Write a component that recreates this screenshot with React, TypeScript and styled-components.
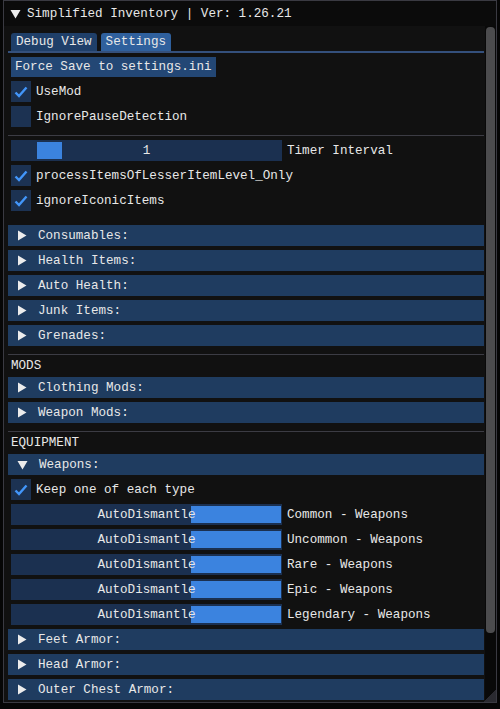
import React from "react";
import styled, { createGlobalStyle } from "styled-components";

const Global = createGlobalStyle`
  html, body { margin: 0; padding: 0; background: #060606; }
  body { width: 500px; height: 709px; overflow: hidden; }
  * { box-sizing: border-box; }
`;

const FONT = `"Liberation Mono", "DejaVu Sans Mono", monospace`;

const Window = styled.div`
  margin-left: 3px;
  width: 494px;
  height: 703px;
  border: 1px solid #3a3a42;
  background: #111111;
  display: flex;
  flex-direction: column;
  font-family: ${FONT};
  font-size: 12.6px;
  color: #e8e8e8;
  position: relative;
`;

const TitleBar = styled.div`
  height: 25px;
  flex: none;
  background: #0b0b0b;
  display: flex;
  align-items: center;
  gap: 6px;
  padding-left: 6px;
  white-space: pre;
`;

const Body = styled.div`
  flex: 1;
  display: flex;
  min-height: 0;
`;

const Content = styled.div`
  flex: 1;
  padding: 7px 4px 0 7px;
  display: flex;
  flex-direction: column;
  gap: 4px;
  overflow: hidden;
  & > * { flex: none; }
`;

const ScrollTrack = styled.div`
  width: 11px;
  flex: none;
  background: #090909;
  padding: 1px 1px 0 1px;
`;

const ScrollThumb = styled.div`
  height: 606px;
  border-radius: 4px;
  background: #4c4c4e;
`;

const TabBar = styled.div`
  display: flex;
  gap: 4px;
  margin: 0 -3px;
  padding-left: 3px;
  border-bottom: 2px solid #34507c;
`;

const Tab = styled.div<{ $active?: boolean }>`
  height: 18px;
  padding: 0 5px;
  display: flex;
  align-items: center;
  border-radius: 3px 3px 0 0;
  background: ${(p) => (p.$active ? "#2f609d" : "#1f3f69")};
  white-space: pre;
`;

const Button = styled.div`
  align-self: flex-start;
  height: 20px;
  padding: 0 4px;
  display: flex;
  align-items: center;
  background: #234775;
  white-space: pre;
`;

const Row = styled.div<{ $mt?: number }>`
  display: flex;
  align-items: center;
  gap: 5px;
  height: 21px;
  margin-top: ${(p) => p.$mt ?? 0}px;
  white-space: pre;
`;

const Box = styled.div`
  width: 20px;
  height: 21px;
  background: #1c3252;
  display: flex;
  align-items: center;
  justify-content: center;
`;

const Separator = styled.div<{ $mt?: number }>`
  height: 1px;
  background: #3c3c44;
  margin: ${(p) => p.$mt ?? 0}px -3px 0 -3px;
`;

const Frame = styled.div`
  position: relative;
  width: 271px;
  height: 21px;
  background: #1b3050;
  display: flex;
  align-items: center;
  justify-content: center;
  flex: none;
`;

const Grab = styled.div<{ $left: number; $width: number }>`
  position: absolute;
  top: 2px;
  bottom: 2px;
  left: ${(p) => p.$left}px;
  width: ${(p) => p.$width}px;
  background: #3b83df;
`;

const FrameText = styled.span`
  position: relative;
`;

const Header = styled.div<{ $mt?: number }>`
  height: 21px;
  margin: ${(p) => p.$mt ?? 0}px -3px 0 -3px;
  background: #1f3c60;
  display: flex;
  align-items: center;
  padding-left: 9px;
  gap: 11px;
  white-space: pre;
`;

const SectionLabel = styled.div`
  height: 14px;
  display: flex;
  align-items: center;
`;

const Grip = styled.div`
  position: absolute;
  right: 0;
  bottom: 0;
  width: 12px;
  height: 12px;
  background: linear-gradient(135deg, transparent 50%, #2a2a30 50%);
`;

const Check = () => (
  <svg width="14" height="12" viewBox="0 0 14 12">
    <path d="M1.5 6.5 L5 10 L12.5 1.5" fill="none" stroke="#4296fa" strokeWidth="2.4" strokeLinejoin="miter" />
  </svg>
);

const ArrowRight = () => (
  <svg width="10" height="11" viewBox="0 0 10 11">
    <path d="M1 0.5 L9.5 5.5 L1 10.5 Z" fill="#ececec" />
  </svg>
);

const ArrowDown = () => (
  <svg width="11" height="10" viewBox="0 0 11 10">
    <path d="M0.5 1 L10.5 1 L5.5 9.5 Z" fill="#ececec" />
  </svg>
);

const CheckRow = ({ label, checked, mt }: { label: string; checked?: boolean; mt?: number }) => (
  <Row $mt={mt}>
    <Box>{checked && <Check />}</Box>
    <span>{label}</span>
  </Row>
);

const CollHeader = ({ label, open, mt }: { label: string; open?: boolean; mt?: number }) => (
  <Header $mt={mt}>
    {open ? <ArrowDown /> : <ArrowRight />}
    <span>{label}</span>
  </Header>
);

const rarities = ["Common", "Uncommon", "Rare", "Epic", "Legendary"];

export default function App() {
  return (
    <>
      <Global />
      <Window>
        <TitleBar>
          <ArrowDown />
          <span>Simplified Inventory | Ver: 1.26.21</span>
        </TitleBar>
        <Body>
          <Content>
            <TabBar>
              <Tab>Debug View</Tab>
              <Tab $active>Settings</Tab>
            </TabBar>
            <Button>Force Save to settings.ini</Button>
            <CheckRow label="UseMod" checked />
            <CheckRow label="IgnorePauseDetection" />
            <Separator $mt={4} />
            <Row>
              <Frame>
                <Grab $left={26} $width={25} />
                <FrameText>1</FrameText>
              </Frame>
              <span>Timer Interval</span>
            </Row>
            <CheckRow label="processItemsOfLesserItemLevel_Only" checked />
            <CheckRow label="ignoreIconicItems" checked />
            <CollHeader label="Consumables:" mt={10} />
            <CollHeader label="Health Items:" />
            <CollHeader label="Auto Health:" />
            <CollHeader label="Junk Items:" />
            <CollHeader label="Grenades:" />
            <Separator $mt={4} />
            <SectionLabel>MODS</SectionLabel>
            <CollHeader label="Clothing Mods:" />
            <CollHeader label="Weapon Mods:" />
            <Separator $mt={4} />
            <SectionLabel>EQUIPMENT</SectionLabel>
            <CollHeader label="Weapons:" open />
            <CheckRow label="Keep one of each type" checked />
            {rarities.map((r) => (
              <Row key={r}>
                <Frame>
                  <Grab $left={180} $width={90} />
                  <FrameText>AutoDismantle</FrameText>
                </Frame>
                <span>{r} - Weapons</span>
              </Row>
            ))}
            <CollHeader label="Feet Armor:" />
            <CollHeader label="Head Armor:" />
            <CollHeader label="Outer Chest Armor:" />
          </Content>
          <ScrollTrack>
            <ScrollThumb />
          </ScrollTrack>
        </Body>
        <Grip />
      </Window>
    </>
  );
}
